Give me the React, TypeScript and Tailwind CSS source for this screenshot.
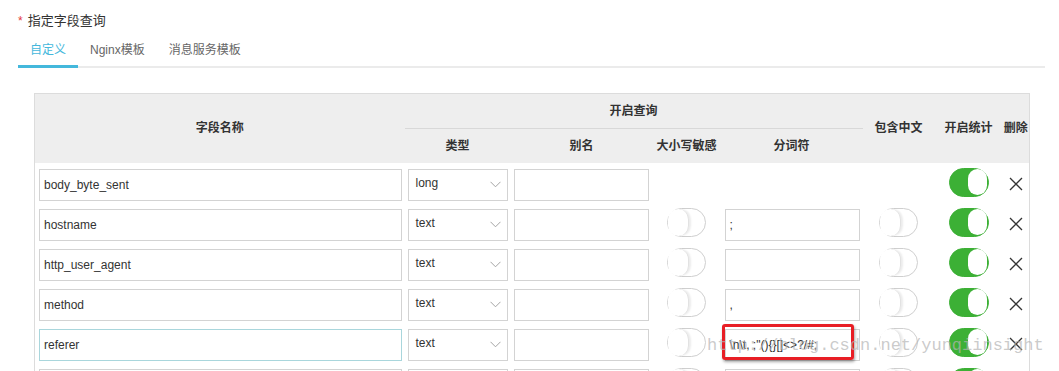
import React from 'react';

type Row = {
    name: string;
    type: string;
    token?: string;
    focus?: boolean;
};

const rows: Row[] = [
    { name: 'body_byte_sent', type: 'long' },
    { name: 'hostname', type: 'text', token: ';' },
    { name: 'http_user_agent', type: 'text', token: '' },
    { name: 'method', type: 'text', token: ',' },
    { name: 'referer', type: 'text', token: '\\n\\t, ;"(){}[]<>?/#;', focus: true },
    { name: '', type: '', token: '' },
];

function Toggle({ on }: { on: boolean }) {
    if (on) {
        return (
            <div className="mx-auto flex h-[29px] w-[40px] items-center justify-end rounded-full border border-[#3cb035] bg-[#3cb035] pr-px">
                <div className="h-[26px] w-[19px] rounded-full bg-white" />
            </div>
        );
    }
    return (
        <div className="mx-auto flex h-[29px] w-[39px] items-center rounded-full border border-[#cfcfcf] bg-white">
            <div className="h-[27px] w-[21px] rounded-full border-r border-[#e2e2e2] bg-white shadow-[2px_0_2px_rgba(0,0,0,0.08)]" />
        </div>
    );
}

function Chevron() {
    return (
        <svg width="11" height="7" viewBox="0 0 11 7" fill="none">
            <path d="M0.5 0.8 L5.5 5.8 L10.5 0.8" stroke="#a3a3a3" strokeWidth="1" />
        </svg>
    );
}

function Cross() {
    return (
        <svg width="14" height="14" viewBox="0 0 14 14" className="mx-auto">
            <path d="M1 1 L13 13 M13 1 L1 13" stroke="#333" strokeWidth="1.3" />
        </svg>
    );
}

const box = 'h-[32px] border bg-white text-[12px] text-[#333] flex items-center px-[4px]';

export default function App() {
    return (
        <main className="relative h-[371px] overflow-hidden bg-white font-['Liberation_Sans','Noto_Sans_CJK_SC',sans-serif] text-[#333]">
            <section className="pl-[18px] pr-[14px] pt-[13px]">
                <h2 className="flex items-center text-[13px] leading-[16px]">
                    <span className="mr-[5px] text-[12px] text-[#e4393c]">*</span>
                    <span>指定字段查询</span>
                </h2>

                <div className="mt-[12px] flex border-b-2 border-[#ebebeb] text-[12px]">
                    <div className="-mb-[2px] w-[60px] border-b-[3px] border-[#44b8dc] pb-[6px] text-center text-[#44b8dc]">自定义</div>
                    <div className="ml-[12px] pb-[6px] text-[#666]">Nginx模板</div>
                    <div className="ml-[24px] pb-[6px] text-[#666]">消息服务模板</div>
                </div>

                <table className="ml-[16px] mt-[25px] w-[995px] table-fixed border-collapse border border-[#dcdcdc] text-[12px]">
                    <colgroup>
                        <col className="w-[370px]" />
                        <col className="w-[106px]" />
                        <col className="w-[142px]" />
                        <col className="w-[68px]" />
                        <col className="w-[142px]" />
                        <col className="w-[72px]" />
                        <col className="w-[68px]" />
                        <col className="w-[27px]" />
                    </colgroup>
                    <thead className="bg-[#eeeeee] font-bold">
                        <tr className="h-[35px]">
                            <th rowSpan={2}>字段名称</th>
                            <th colSpan={4} className="border-b border-[#d8d8d8]">开启查询</th>
                            <th rowSpan={2}>包含中文</th>
                            <th rowSpan={2}>开启统计</th>
                            <th rowSpan={2} className="whitespace-nowrap">删除</th>
                        </tr>
                        <tr className="h-[34px]">
                            <th>类型</th>
                            <th>别名</th>
                            <th>大小写敏感</th>
                            <th>分词符</th>
                        </tr>
                    </thead>
                    <tbody>
                        {rows.map((r, i) => (
                            <tr key={i} className="h-[40px] align-top">
                                <td className="pl-[4px] pr-[3px] pt-[6px]">
                                    <div className={`${box} ${r.focus ? 'border-[#a9d6dc]' : 'border-[#d3d3d3]'}`}>{r.name}</div>
                                </td>
                                <td className="px-[3px] pt-[6px]">
                                    <div className={`${box} justify-between border-[#d3d3d3] pl-[7px] pr-[6px]`}>
                                        <span className="-mt-[3px]">{r.type}</span>
                                        <Chevron />
                                    </div>
                                </td>
                                <td className="pl-[3px] pr-[4px] pt-[6px]">
                                    <div className={`${box} border-[#d3d3d3]`} />
                                </td>
                                <td className="pt-[5px]">{r.token !== undefined && <Toggle on={false} />}</td>
                                <td className="pl-[4px] pr-[3px] pt-[6px]">
                                    {r.token !== undefined && (
                                        <div className={`${box} border-[#d3d3d3]`}>{r.token}</div>
                                    )}
                                </td>
                                <td className="pt-[5px]">{r.token !== undefined && <Toggle on={false} />}</td>
                                <td className="pt-[5px]">
                                    <Toggle on />
                                </td>
                                <td className="pt-[14px]">
                                    <Cross />
                                </td>
                            </tr>
                        ))}
                    </tbody>
                </table>
            </section>

            {/* annotation + watermark */}
            <div className="absolute left-[722px] top-[324px] h-[36px] w-[132px] rounded-[3px] border-[3px] border-[#e81e25] shadow-[1px_2px_3px_rgba(0,0,0,0.35)]" />
            <div className="pointer-events-none absolute left-[707px] top-[333px] font-['Liberation_Mono',monospace] text-[17px] text-[#b4b4b4]/70">
                http://blog.csdn.net/yunqiinsight
            </div>
        </main>
    );
}
